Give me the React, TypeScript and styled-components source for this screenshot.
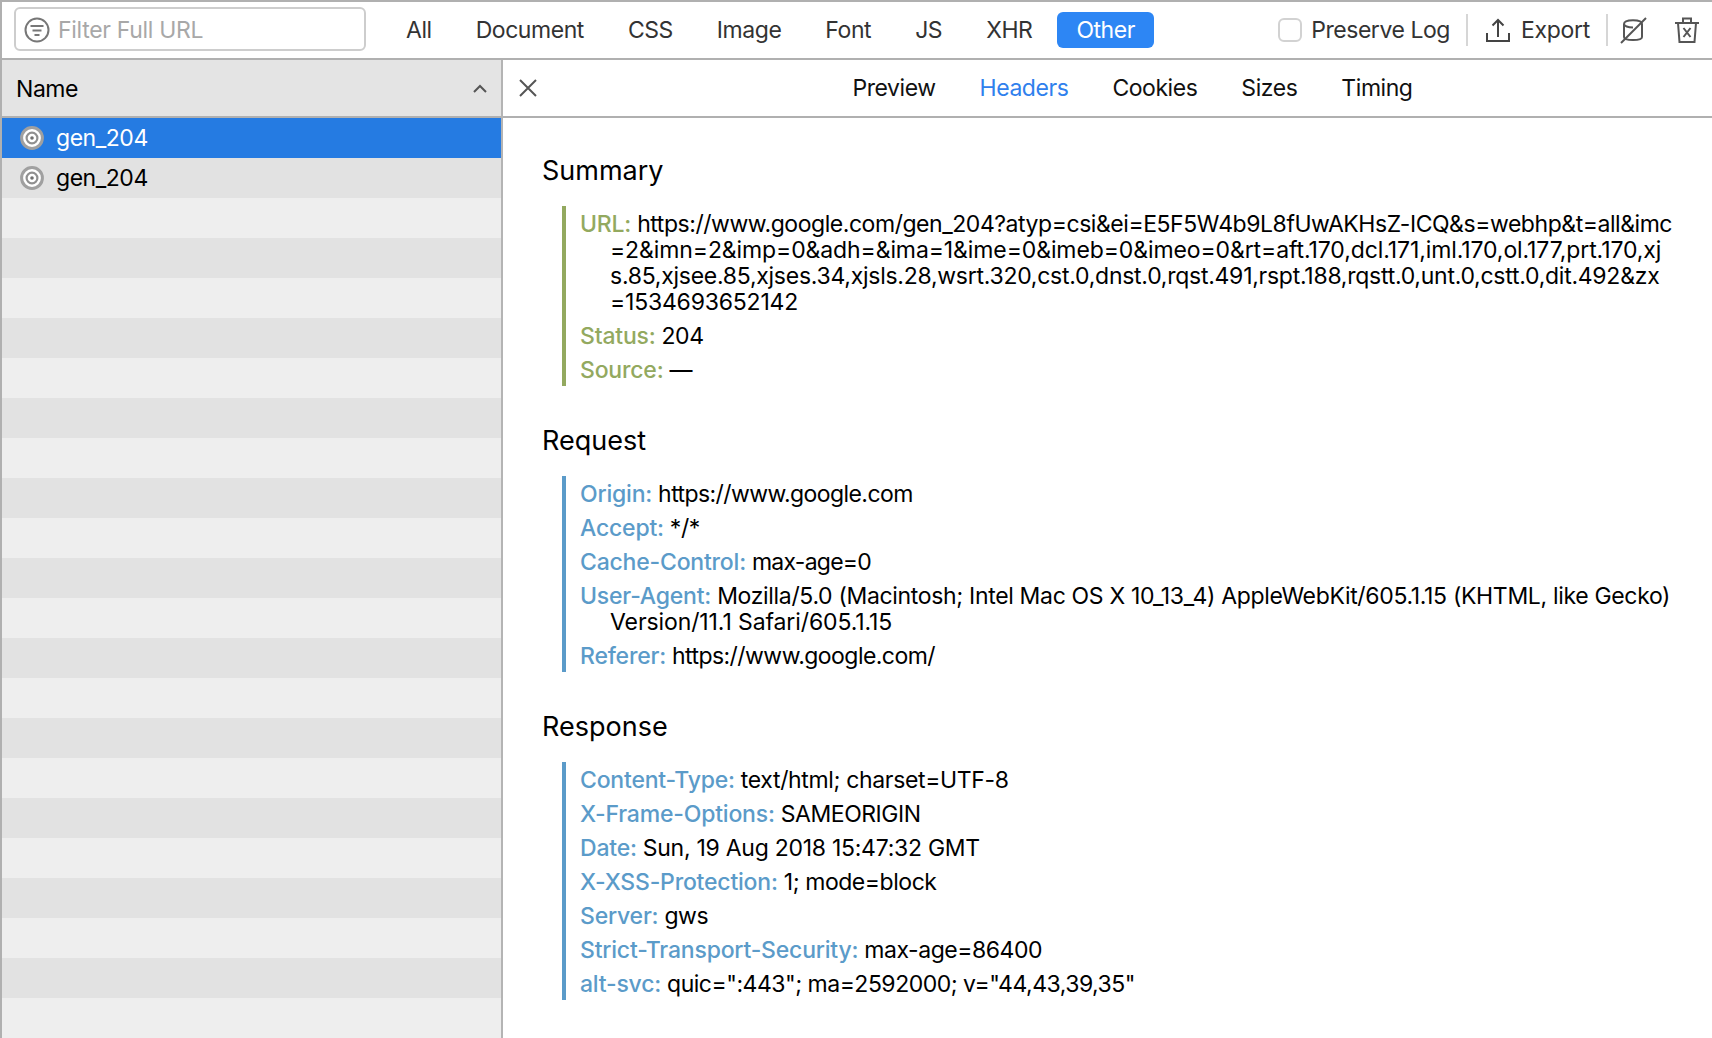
import React from 'react'
import styled, { createGlobalStyle } from 'styled-components'

const GlobalStyle = createGlobalStyle`
  html, body {
    margin: 0;
    padding: 0;
    background: #fff;
  }
  body {
    font-family: Inter, "Liberation Sans", sans-serif;
    -webkit-font-smoothing: antialiased;
  }
`

const Page = styled.div`
  width: 1712px;
  height: 1038px;
  box-sizing: border-box;
  border-top: 2px solid #b0b0b0;
  border-left: 2px solid #b0b0b0;
  display: flex;
  flex-direction: column;
  overflow: hidden;
  font-size: 23px;
  letter-spacing: -0.45px;
  color: #000;
`

const Toolbar = styled.div`
  height: 58px;
  flex: none;
  box-sizing: border-box;
  border-bottom: 2px solid #b0b0b0;
  display: flex;
  align-items: center;
  padding: 0 12px;
  color: #333;
`

const FilterBox = styled.div`
  width: 352px;
  height: 44px;
  box-sizing: border-box;
  border: 2px solid #cdcdcd;
  border-radius: 6px;
  display: flex;
  align-items: center;
  gap: 8px;
  padding: 2px 8px 0;
  color: #a8a8a8;
  margin: 0 21px 2px 0;
  letter-spacing: -0.3px;
`

const ResourceTab = styled.div<{ $active?: boolean }>`
  height: 36px;
  display: flex;
  align-items: center;
  padding: 0 19px;
  margin-right: 6px;
  border-radius: 6px;
  background: ${p => (p.$active ? '#2d86f4' : 'transparent')};
  color: ${p => (p.$active ? '#fff' : '#333')};
`

const ToolbarRight = styled.div`
  margin-left: auto;
  display: flex;
  align-items: center;
`

const Checkbox = styled.div`
  width: 24px;
  height: 24px;
  box-sizing: border-box;
  border: 2px solid #d2d2d2;
  border-radius: 6px;
  margin-right: 9px;
`

const Separator = styled.div`
  width: 2px;
  height: 32px;
  background: #d6d6d6;
  margin-left: 16px;
`

const ExportButton = styled.div`
  display: flex;
  align-items: center;
  gap: 11px;
  margin-left: 18px;
  letter-spacing: -0.3px;
`

const IconSlot = styled.div`
  display: flex;
  margin-left: 11px;
  & + & {
    margin-left: 27px;
  }
`

const Body = styled.div`
  flex: 1;
  display: flex;
  min-height: 0;
`

const Sidebar = styled.div`
  width: 501px;
  flex: none;
  box-sizing: border-box;
  display: flex;
  flex-direction: column;
  border-right: 2px solid #b4b4b4;
`

const SidebarHead = styled.div`
  height: 58px;
  flex: none;
  box-sizing: border-box;
  background: #e4e4e4;
  border-bottom: 2px solid #b0b0b0;
  display: flex;
  align-items: center;
  justify-content: space-between;
  padding: 2px 14px 0;
`

const Rows = styled.div`
  flex: 1;
  overflow: hidden;
`

const Row = styled.div<{ $selected?: boolean }>`
  height: 40px;
  display: flex;
  align-items: center;
  gap: 12px;
  padding-left: 18px;
  background: #eeeeee;
  &:nth-child(even) {
    background: #e2e2e2;
  }
  ${p => p.$selected && `
    &:nth-child(odd) {
      background: #257be2;
    }
    color: #fff;
  `}
`

const Detail = styled.div`
  flex: 1;
  min-width: 0;
  display: flex;
  flex-direction: column;
`

const DetailHead = styled.div`
  height: 58px;
  flex: none;
  box-sizing: border-box;
  border-bottom: 2px solid #b0b0b0;
  display: flex;
  align-items: center;
`

const CloseButton = styled.div`
  width: 50px;
  flex: none;
  display: flex;
  justify-content: center;
`

const DetailTabs = styled.div`
  flex: 1;
  display: flex;
  justify-content: center;
  gap: 44px;
  color: #111;
`

const DetailTab = styled.div<{ $active?: boolean }>`
  color: ${p => (p.$active ? '#2f80ed' : 'inherit')};
`

const Content = styled.div`
  flex: 1;
  padding: 36px 0 0 39px;
`

const Section = styled.section`
  margin-bottom: 38px;
`

const Heading = styled.h2`
  margin: 0 0 19px;
  padding-top: 1px;
  font-size: 27px;
  font-weight: 400;
  line-height: 32px;
  letter-spacing: 0;
`

const Block = styled.div<{ $color: string }>`
  margin-left: 20px;
  border-left: 4px solid ${p => p.$color};
  padding-left: 14px;
`

const Item = styled.div`
  padding: 5px 0 3px 30px;
  line-height: 26px;
  text-indent: -30px;
  white-space: nowrap;
`

const Label = styled.span<{ $color: string }>`
  color: ${p => p.$color};
  font-weight: 500;
  letter-spacing: -0.2px;
`

// wrapped values keep the line breaks of the capture, tracking evens out their widths
const Line = styled.span<{ $tracking: number }>`
  letter-spacing: ${p => p.$tracking}px;
`

const GREEN = '#93a95f'
const BLUE = '#5b9bc9'

const FilterIcon = () => (
  <svg width="26" height="26" viewBox="0 0 26 26" fill="none" stroke="#777">
    <circle cx="13" cy="13" r="11.5" strokeWidth="2" />
    <path d="M6.5 9h13M8.5 13.5h9M10.5 18h5" strokeWidth="2" />
  </svg>
)

const ExportIcon = () => (
  <svg width="24" height="24" viewBox="0 0 24 24" fill="none" stroke="#444" strokeWidth="2">
    <path d="M1 15v8h22v-8M12 19V2M6.5 7.5L12 2l5.5 5.5" />
  </svg>
)

const CacheIcon = () => (
  <svg width="28" height="28" viewBox="0 0 28 28" fill="none" stroke="#555" strokeWidth="2">
    <path d="M5 8c0-5 18-5 18 0v13c0 4-18 4-18 0zM5 8c0 2 4 3.5 9 3.5" />
    <path d="M2 27L27 2" />
  </svg>
)

const TrashIcon = () => (
  <svg width="26" height="26" viewBox="0 0 26 26" fill="none" stroke="#555" strokeWidth="2">
    <path d="M1 6h24M9 6V1.5h8V6M4 6l1.5 19h15L22 6M9.5 11l7 9M16.5 11l-7 9" />
  </svg>
)

const ChevronUp = () => (
  <svg width="14" height="10" viewBox="0 0 14 10" fill="none" stroke="#555" strokeWidth="2">
    <path d="M1 8l6-6 6 6" />
  </svg>
)

const CloseIcon = () => (
  <svg width="20" height="20" viewBox="0 0 20 20" fill="none" stroke="#555" strokeWidth="2">
    <path d="M2 2l16 16M18 2L2 18" />
  </svg>
)

const RequestIcon = () => (
  <svg width="24" height="24" viewBox="0 0 24 24">
    <circle cx="12" cy="12" r="10.4" fill="#fff" stroke="#a0a0a0" strokeWidth="3" />
    <circle cx="12" cy="12" r="5.4" fill="#fff" stroke="#909090" strokeWidth="2.2" />
    <circle cx="12" cy="12" r="1.8" fill="#707070" />
  </svg>
)

const resourceTabs = ['All', 'Document', 'CSS', 'Image', 'Font', 'JS', 'XHR', 'Other']
const detailTabs = ['Preview', 'Headers', 'Cookies', 'Sizes', 'Timing']

interface ISection {
  title: string,
  color: string,
  items: [string, React.ReactNode][]
}

const sections: ISection[] = [
  {
    title: 'Summary',
    color: GREEN,
    items: [
      ['URL:', <>
        <Line $tracking={-0.45}>https://www.google.com/gen_204?atyp=csi&amp;ei=E5F5W4b9L8fUwAKHsZ-ICQ&amp;s=webhp&amp;t=all&amp;imc</Line><br />
        <Line $tracking={-0.1}>=2&amp;imn=2&amp;imp=0&amp;adh=&amp;ima=1&amp;ime=0&amp;imeb=0&amp;imeo=0&amp;rt=aft.170,dcl.171,iml.170,ol.177,prt.170,xj</Line><br />
        <Line $tracking={-0.26}>s.85,xjsee.85,xjses.34,xjsls.28,wsrt.320,cst.0,dnst.0,rqst.491,rspt.188,rqstt.0,unt.0,cstt.0,dit.492&amp;zx</Line><br />
        <Line $tracking={-0.2}>=1534693652142</Line>
      </>],
      ['Status:', '204'],
      ['Source:', '—'],
    ],
  },
  {
    title: 'Request',
    color: BLUE,
    items: [
      ['Origin:', <Line $tracking={-0.58}>https://www.google.com</Line>],
      ['Accept:', '*/*'],
      ['Cache-Control:', <Line $tracking={-0.75}>max-age=0</Line>],
      ['User-Agent:', <>
        <Line $tracking={-0.33}>Mozilla/5.0 (Macintosh; Intel Mac OS X 10_13_4) AppleWebKit/605.1.15 (KHTML, like Gecko)</Line><br />
        <Line $tracking={-0.1}>Version/11.1 Safari/605.1.15</Line>
      </>],
      ['Referer:', <Line $tracking={-0.55}>https://www.google.com/</Line>],
    ],
  },
  {
    title: 'Response',
    color: BLUE,
    items: [
      ['Content-Type:', <Line $tracking={-0.35}>text/html; charset=UTF-8</Line>],
      ['X-Frame-Options:', 'SAMEORIGIN'],
      ['Date:', <Line $tracking={-0.27}>Sun, 19 Aug 2018 15:47:32 GMT</Line>],
      ['X-XSS-Protection:', '1; mode=block'],
      ['Server:', 'gws'],
      ['Strict-Transport-Security:', 'max-age=86400'],
      ['alt-svc:', <Line $tracking={-0.5}>quic=":443"; ma=2592000; v="44,43,39,35"</Line>],
    ],
  },
]

const App = () => {
  const rows = Array.from({ length: 23 }, (_, i) => i)

  return (
    <Page>
      <GlobalStyle />
      <Toolbar>
        <FilterBox>
          <FilterIcon />
          Filter Full URL
        </FilterBox>
        {resourceTabs.map(tab => (
          <ResourceTab key={tab} $active={tab === 'Other'}>{tab}</ResourceTab>
        ))}
        <ToolbarRight>
          <Checkbox />
          Preserve Log
          <Separator />
          <ExportButton>
            <ExportIcon />
            Export
          </ExportButton>
          <Separator />
          <IconSlot><CacheIcon /></IconSlot>
          <IconSlot><TrashIcon /></IconSlot>
        </ToolbarRight>
      </Toolbar>
      <Body>
        <Sidebar>
          <SidebarHead>
            Name
            <ChevronUp />
          </SidebarHead>
          <Rows>
            {rows.map(i => (
              <Row key={i} $selected={i === 0}>
                {i < 2 && <RequestIcon />}
                {i < 2 && 'gen_204'}
              </Row>
            ))}
          </Rows>
        </Sidebar>
        <Detail>
          <DetailHead>
            <CloseButton><CloseIcon /></CloseButton>
            <DetailTabs>
              {detailTabs.map(tab => (
                <DetailTab key={tab} $active={tab === 'Headers'}>{tab}</DetailTab>
              ))}
            </DetailTabs>
          </DetailHead>
          <Content>
            {sections.map(section => (
              <Section key={section.title}>
                <Heading>{section.title}</Heading>
                <Block $color={section.color}>
                  {section.items.map(([label, value]) => (
                    <Item key={label}>
                      <Label $color={section.color}>{label}</Label> {value}
                    </Item>
                  ))}
                </Block>
              </Section>
            ))}
          </Content>
        </Detail>
      </Body>
    </Page>
  )
}

export default App
